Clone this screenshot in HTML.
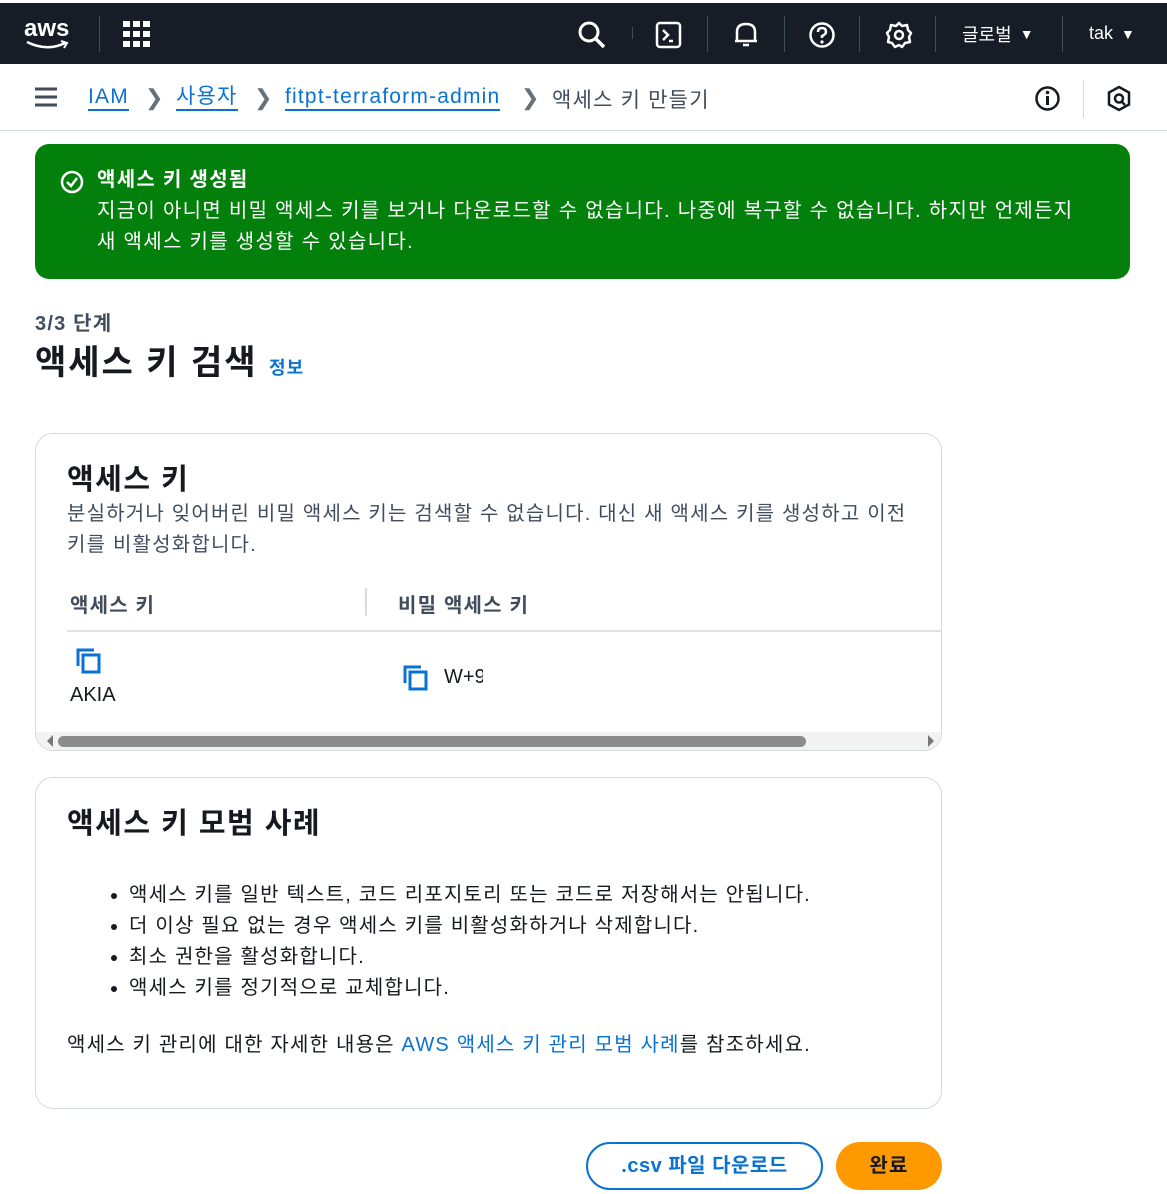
<!DOCTYPE html>
<html><head><meta charset="utf-8"><style>
*{box-sizing:border-box;margin:0;padding:0}
body{width:1167px;height:1194px;background:#fff;font-family:"Liberation Sans","Noto Sans CJK KR",sans-serif;color:#16191f;position:relative;overflow:hidden;letter-spacing:1.2px}
.top{position:absolute;top:3px;left:0;width:1167px;height:61px;background:#161d26;color:#fff}
.top .it{position:absolute;top:0;height:61px;display:flex;align-items:center;font-size:18px}
.sep{position:absolute;top:13px;width:1px;height:36px;background:#414d5c}
.bc{position:absolute;top:65px;left:0;width:1167px;height:66px;border-bottom:1px solid #d5dbdb;font-size:21px}
.bc a{color:#0972d3;text-decoration:none;border-bottom:2px solid #0972d3;position:absolute;top:19px;line-height:25px}
.chev{position:absolute;top:20px;color:#687078;font-size:22px}
.flash{position:absolute;left:35px;top:144px;width:1095px;height:135px;background:#037f0c;border-radius:14px;color:#fff;font-size:20px;line-height:31px;padding:21px 0 0 62px}
.card{position:absolute;left:35px;width:907px;border:1px solid #d5dbdb;border-radius:18px;background:#fff}
.blue{color:#0972d3}
</style></head><body>
<div class="top">
 <div class="it" style="left:24px;font-size:24px;font-weight:bold;flex-direction:column;justify-content:center;line-height:22px;letter-spacing:0">aws<svg width="44" height="10" viewBox="0 0 44 10"><path d="M2 2 Q22 12 40 3" stroke="#fff" stroke-width="2.5" fill="none"/><path d="M36 1 L42 3 L39 8" stroke="#fff" stroke-width="2" fill="none"/></svg></div>
 <div class="sep" style="left:99px"></div>
 <svg style="position:absolute;left:123px;top:18px" width="27" height="26"><g fill="#fff"><rect x="0" y="0" width="7" height="6"/><rect x="10" y="0" width="7" height="6"/><rect x="20" y="0" width="7" height="6"/><rect x="0" y="10" width="7" height="6"/><rect x="10" y="10" width="7" height="6"/><rect x="20" y="10" width="7" height="6"/><rect x="0" y="20" width="7" height="6"/><rect x="10" y="20" width="7" height="6"/><rect x="20" y="20" width="7" height="6"/></g></svg>
 <svg style="position:absolute;left:577px;top:17px" width="30" height="30"><circle cx="12" cy="12" r="9" stroke="#fff" stroke-width="3" fill="none"/><path d="M19 19 L27 27" stroke="#fff" stroke-width="3.5"/></svg>
 <div class="sep" style="left:632px;top:24px;height:12px"></div>
 <svg style="position:absolute;left:655px;top:18px" width="28" height="28"><rect x="2" y="2" width="23" height="24" rx="3" stroke="#fff" stroke-width="2.5" fill="none"/><path d="M8 9 L13 14 L8 19 M14 20 H18" stroke="#fff" stroke-width="2.5" fill="none"/></svg>
 <div class="sep" style="left:707px"></div>
 <svg style="position:absolute;left:732px;top:17px" width="28" height="30"><path d="M5 21 L5 12 Q5 4 14 4 Q23 4 23 12 L23 21 Z M3 21 H25 M11 25 H17" stroke="#fff" stroke-width="2.5" fill="none" stroke-linejoin="round"/></svg>
 <div class="sep" style="left:784px"></div>
 <svg style="position:absolute;left:808px;top:18px" width="28" height="28"><circle cx="14" cy="14" r="11.5" stroke="#fff" stroke-width="2.5" fill="none"/><path d="M10 11 Q10 7 14 7 Q18 7 18 11 Q18 13 14 15 V17" stroke="#fff" stroke-width="2.5" fill="none"/><circle cx="14" cy="21" r="1.6" fill="#fff"/></svg>
 <div class="sep" style="left:859px"></div>
 <svg style="position:absolute;left:884px;top:17px" width="30" height="30"><circle cx="15" cy="15" r="4" stroke="#fff" stroke-width="2.5" fill="none"/><path d="M15 3 L18 6 L23 5 L24 10 L27 13 L25 17 L26 22 L21 23 L18 27 L15 25 L11 27 L8 23 L4 22 L5 17 L3 13 L6 10 L7 5 L12 6 Z" stroke="#fff" stroke-width="2.5" fill="none" stroke-linejoin="round"/></svg>
 <div class="sep" style="left:935px"></div>
 <div class="it" style="left:962px;letter-spacing:0">글로벌 <span style="font-size:14px;margin-left:8px">▼</span></div>
 <div class="sep" style="left:1062px"></div>
 <div class="it" style="left:1089px;letter-spacing:0">tak <span style="font-size:14px;margin-left:8px">▼</span></div>
</div>
<div class="bc">
 <svg style="position:absolute;left:35px;top:22px" width="22" height="20"><path d="M0 2H22M0 10H22M0 18H22" stroke="#414d5c" stroke-width="3"/></svg>
 <a style="left:88px">IAM</a><span class="chev" style="left:145px">❯</span>
 <a style="left:176px">사용자</a><span class="chev" style="left:254px">❯</span>
 <a style="left:285px">fitpt-terraform-admin</a><span class="chev" style="left:521px">❯</span>
 <span style="position:absolute;left:552px;top:19px;color:#414d5c">액세스 키 만들기</span>
 <svg style="position:absolute;left:1034px;top:20px" width="27" height="27"><circle cx="13.5" cy="13.5" r="11" stroke="#16191f" stroke-width="2.5" fill="none"/><path d="M13.5 11V20" stroke="#16191f" stroke-width="3"/><circle cx="13.5" cy="7.5" r="1.8" fill="#16191f"/></svg>
 <div style="position:absolute;left:1083px;top:15px;width:1px;height:38px;background:#d5dbdb"></div>
 <svg style="position:absolute;left:1106px;top:20px" width="26" height="27"><path d="M13 2L23 7.5V19.5L13 25L3 19.5V7.5Z" stroke="#16191f" stroke-width="2.5" fill="none"/><circle cx="13" cy="13.5" r="4" stroke="#16191f" stroke-width="2.5" fill="none"/><path d="M15 16 L19 20" stroke="#16191f" stroke-width="2.5"/></svg>
</div>
<div class="flash" style="letter-spacing:1.3px">
 <svg style="position:absolute;left:25px;top:26px" width="24" height="24"><circle cx="12" cy="12" r="10" stroke="#fff" stroke-width="2.5" fill="none"/><path d="M7 12L11 16L17 8" stroke="#fff" stroke-width="2.5" fill="none"/></svg>
 <b>액세스 키 생성됨</b><br>지금이 아니면 비밀 액세스 키를 보거나 다운로드할 수 없습니다. 나중에 복구할 수 없습니다. 하지만 언제든지<br>새 액세스 키를 생성할 수 있습니다.
</div>
<div style="position:absolute;left:35px;top:307px;font-size:20px;font-weight:bold;color:#414d5c">3/3 단계</div>
<div style="position:absolute;left:35px;top:335px;font-size:34px;font-weight:bold;letter-spacing:2px">액세스 키 검색 <span class="blue" style="font-size:18px;letter-spacing:1px">정보</span></div>
<div class="card" style="top:433px;height:318px;overflow:hidden">
 <div style="position:absolute;left:31px;top:22px;font-size:29px;font-weight:bold;letter-spacing:1.5px">액세스 키</div>
 <div style="position:absolute;left:31px;top:65px;font-size:20px;line-height:31px;color:#414d5c;width:850px">분실하거나 잊어버린 비밀 액세스 키는 검색할 수 없습니다. 대신 새 액세스 키를 생성하고 이전 키를 비활성화합니다.</div>
 <div style="position:absolute;left:34px;top:155px;font-size:20px;font-weight:bold;color:#414d5c">액세스 키</div>
 <div style="position:absolute;left:329px;top:154px;width:2px;height:28px;background:#d5dbdb"></div>
 <div style="position:absolute;left:362px;top:155px;font-size:20px;font-weight:bold;color:#414d5c">비밀 액세스 키</div>
 <div style="position:absolute;left:31px;top:196px;width:880px;height:2px;background:#e0e3e6"></div>
 <svg style="position:absolute;left:40px;top:214px" width="26" height="26"><path d="M2 18V2H18" stroke="#0972d3" stroke-width="3" fill="none"/><rect x="7" y="7" width="16" height="17" stroke="#0972d3" stroke-width="3" fill="none"/></svg>
 <div style="position:absolute;left:34px;top:250px;font-size:20px;width:50px;overflow:hidden;letter-spacing:0">AKIA</div>
 <svg style="position:absolute;left:367px;top:231px" width="26" height="26"><path d="M2 18V2H18" stroke="#0972d3" stroke-width="3" fill="none"/><rect x="7" y="7" width="16" height="17" stroke="#0972d3" stroke-width="3" fill="none"/></svg>
 <div style="position:absolute;left:408px;top:232px;font-size:20px;width:39px;overflow:hidden;letter-spacing:0">W+9</div>
 <div style="position:absolute;left:0;top:298px;width:907px;height:20px;background:#f3f3f3"></div>
 <div style="position:absolute;left:22px;top:302px;width:748px;height:11px;border-radius:6px;background:#8c8c8c"></div>
 <div style="position:absolute;left:5px;top:301px;width:0;height:0;border:6px solid transparent;border-right-color:#777"></div>
 <div style="position:absolute;left:892px;top:301px;width:0;height:0;border:6px solid transparent;border-left-color:#777"></div>
</div>
<div class="card" style="top:777px;height:332px">
 <div style="position:absolute;left:31px;top:22px;font-size:29px;font-weight:bold;letter-spacing:1.5px">액세스 키 모범 사례</div>
 <ul style="position:absolute;left:93px;top:102px;font-size:20px;line-height:31px;color:#16191f">
  <li>액세스 키를 일반 텍스트, 코드 리포지토리 또는 코드로 저장해서는 안됩니다.</li>
  <li>더 이상 필요 없는 경우 액세스 키를 비활성화하거나 삭제합니다.</li>
  <li>최소 권한을 활성화합니다.</li>
  <li>액세스 키를 정기적으로 교체합니다.</li>
 </ul>
 <div style="position:absolute;left:31px;top:250px;font-size:20px">액세스 키 관리에 대한 자세한 내용은 <span class="blue">AWS 액세스 키 관리 모범 사례</span>를 참조하세요.</div>
</div>
<div style="position:absolute;left:586px;top:1142px;width:237px;height:48px;border:2px solid #0972d3;border-radius:24px;color:#0972d3;font-size:20px;font-weight:bold;text-align:center;line-height:44px;letter-spacing:0.5px">.csv 파일 다운로드</div>
<div style="position:absolute;left:836px;top:1142px;width:106px;height:48px;background:#ff9900;border-radius:24px;font-size:20px;font-weight:bold;text-align:center;line-height:48px">완료</div>
</body></html>
